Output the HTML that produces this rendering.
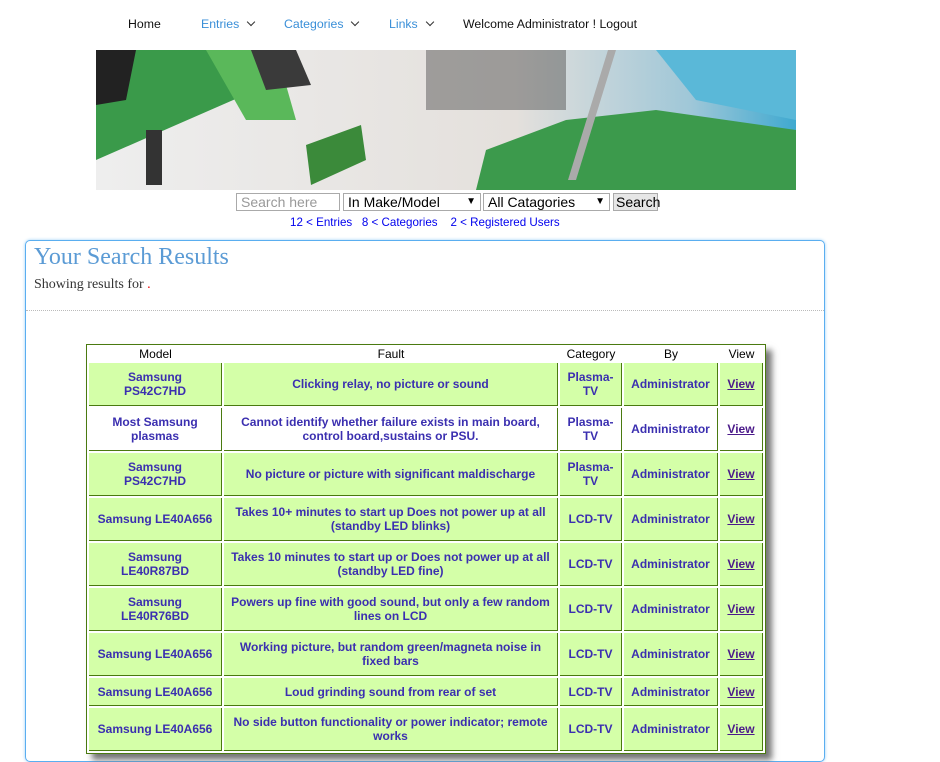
<!DOCTYPE html>
<html><head><meta charset="utf-8"><style>
body{margin:0;background:#fff;width:940px;height:728px;overflow:hidden;font-family:"Liberation Sans",Arial,sans-serif;position:relative}
.nav{position:absolute;top:17px;font-size:12.3px;color:#111}
.nav.b{color:#3a8fd8}
.chev{display:inline-block;width:5px;height:5px;border-right:1.5px solid #333;border-bottom:1.5px solid #333;transform:rotate(45deg);margin-left:9px;position:relative;top:-3px}
#ban{position:absolute;left:96px;top:50px;width:700px;height:140px;overflow:hidden;background:#f2f2f2}
.sf{position:absolute;top:193px;height:18px;box-sizing:border-box;border:1px solid #aaa;font-size:14px;background:#fff;padding:0 4px;line-height:16px}
.stats{position:absolute;top:216px;left:290px;font-size:11.6px;color:#0000ee;word-spacing:0}
.box{position:absolute;left:25px;top:240px;width:798px;height:520px;border:1px solid #5aaef0;border-radius:5px;box-shadow:0 0 3px #9cd0f8}
h1{position:absolute;left:8px;top:0;margin:0;font-family:"Liberation Serif",serif;font-weight:normal;font-size:24px;color:#5b9bd5;line-height:32px}
.sh{position:absolute;left:8px;top:36px;font-family:"Liberation Serif",serif;font-size:14px;color:#333}
.hr{position:absolute;left:0;right:0;top:69px;border-top:1px dotted #bbb}
table{position:absolute;left:60px;top:103px;border:1px solid #4a7a10;border-spacing:2px;box-shadow:6px 6px 6px #777;background:#fff}
td,th{font-size:12px;text-align:center;padding:0;line-height:14px}
th{font-weight:normal;color:#000;height:14px}
td{background:#d4ffa8;border:1px solid #4a7a10;border-top:none;border-left:none;color:#3b2fb0;font-weight:bold;height:42px}
tr.s td{height:27px}
td a{color:#4b1a8a;text-decoration:underline}
tr.w td{background:#fff}
</style></head><body>
<div class="nav" style="left:128px">Home</div>
<div class="nav b" style="left:201px">Entries<span class="chev"></span></div>
<div class="nav b" style="left:284px">Categories<span class="chev"></span></div>
<div class="nav b" style="left:389px">Links<span class="chev"></span></div>
<div class="nav" style="left:463px">Welcome Administrator ! Logout</div>
<div id="ban">
<svg width="700" height="140">
<defs><linearGradient id="g" x1="0" x2="1"><stop offset="0" stop-color="#eee"/><stop offset=".6" stop-color="#e4e0dc"/><stop offset=".85" stop-color="#9fc7d8"/><stop offset="1" stop-color="#3fa9d0"/></linearGradient></defs>
<rect width="700" height="140" fill="url(#g)"/>
<rect x="330" y="0" width="140" height="60" fill="#555" opacity=".5"/>
<polygon points="0,0 150,0 160,40 0,110" fill="#3a9a4a"/>
<polygon points="0,0 40,0 30,50 0,55" fill="#222"/>
<polygon points="110,0 180,0 200,70 150,70" fill="#5ab85a"/>
<polygon points="155,0 200,0 215,35 170,40" fill="#3a3a3a"/>
<polygon points="210,95 265,75 270,110 215,135" fill="#3b8a3a"/>
<rect x="50" y="80" width="16" height="55" fill="#333"/>
<polygon points="390,100 470,70 560,60 700,80 700,140 380,140" fill="#3c9a4c"/>
<polygon points="560,0 700,0 700,70 600,50" fill="#5ab8d8"/>
<polygon points="512,0 520,0 480,130 472,130" fill="#aaa"/>
</svg></div>
<input class="sf" style="left:236px;width:104px;color:#999" value="Search here">
<div class="sf" style="left:343px;width:138px">In Make/Model<span style="position:absolute;right:4px;font-size:10px">▼</span></div>
<div class="sf" style="left:483px;width:127px">All Catagories<span style="position:absolute;right:4px;font-size:10px">▼</span></div>
<div class="sf" style="left:613px;width:45px;background:#e6e6e6;padding:0 2px">Search</div>
<div class="stats">12 &lt; Entries &nbsp;&nbsp;8 &lt; Categories &nbsp;&nbsp;&nbsp;2 &lt; Registered Users</div>
<div class="box">
<h1>Your Search Results</h1>
<div class="sh">Showing results for <span style="color:#e00">.</span></div>
<div class="hr"></div>
<table>
<tr><th style="width:133px">Model</th><th style="width:334px">Fault</th><th style="width:62px">Category</th><th style="width:94px">By</th><th style="width:43px">View</th></tr>
<tr><td>Samsung<br>PS42C7HD</td><td>Clicking relay, no picture or sound</td><td>Plasma-<br>TV</td><td>Administrator</td><td><a>View</a></td></tr>
<tr class="w"><td>Most Samsung<br>plasmas</td><td>Cannot identify whether failure exists in main board,<br>control board,sustains or PSU.</td><td>Plasma-<br>TV</td><td>Administrator</td><td><a>View</a></td></tr>
<tr><td>Samsung<br>PS42C7HD</td><td>No picture or picture with significant maldischarge</td><td>Plasma-<br>TV</td><td>Administrator</td><td><a>View</a></td></tr>
<tr><td>Samsung LE40A656</td><td>Takes 10+ minutes to start up Does not power up at all<br>(standby LED blinks)</td><td>LCD-TV</td><td>Administrator</td><td><a>View</a></td></tr>
<tr><td>Samsung<br>LE40R87BD</td><td>Takes 10 minutes to start up or Does not power up at all<br>(standby LED fine)</td><td>LCD-TV</td><td>Administrator</td><td><a>View</a></td></tr>
<tr><td>Samsung<br>LE40R76BD</td><td>Powers up fine with good sound, but only a few random<br>lines on LCD</td><td>LCD-TV</td><td>Administrator</td><td><a>View</a></td></tr>
<tr><td>Samsung LE40A656</td><td>Working picture, but random green/magneta noise in<br>fixed bars</td><td>LCD-TV</td><td>Administrator</td><td><a>View</a></td></tr>
<tr class="s"><td>Samsung LE40A656</td><td>Loud grinding sound from rear of set</td><td>LCD-TV</td><td>Administrator</td><td><a>View</a></td></tr>
<tr><td>Samsung LE40A656</td><td>No side button functionality or power indicator; remote<br>works</td><td>LCD-TV</td><td>Administrator</td><td><a>View</a></td></tr>
</table>
</div>
</body></html>
